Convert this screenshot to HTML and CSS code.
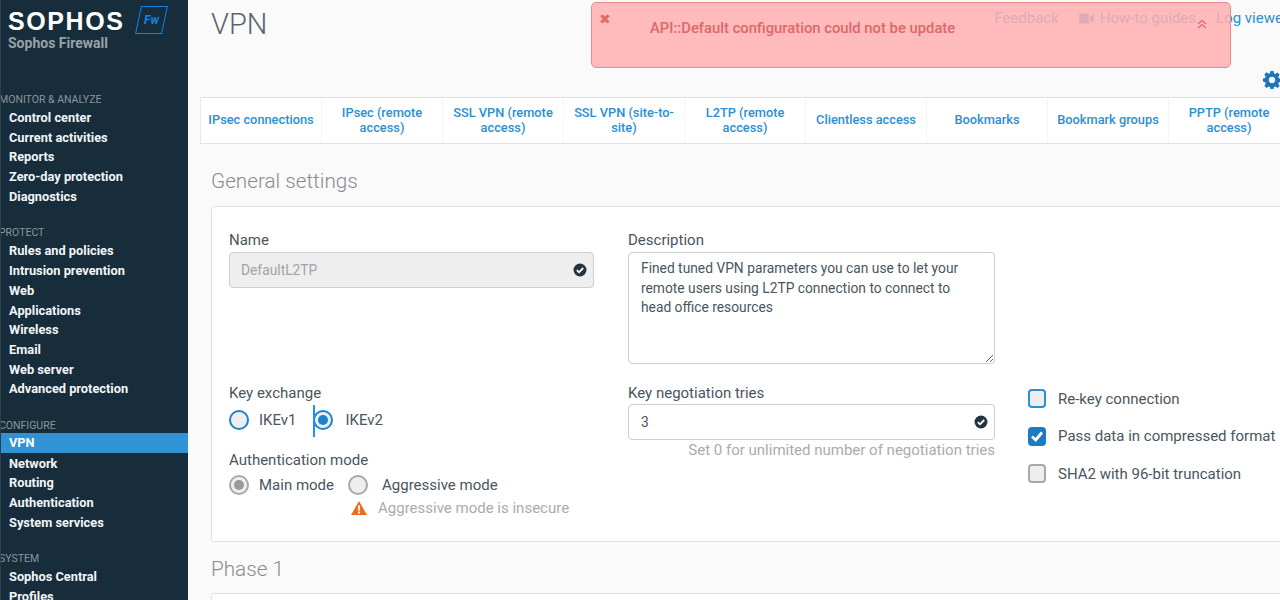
FILE: index.html
```html
<!DOCTYPE html>
<html lang="en">
<head>
<meta charset="utf-8">
<title>VPN - Sophos Firewall</title>
<link rel="stylesheet" href="styles.css">
</head>
<body>
<div class="app">
  <aside class="sidebar">
    <div class="brand">
      <div class="brand-top">
        <span class="logo">SOPHOS</span>
        <span class="fw"><span class="fw-text">Fw</span></span>
      </div>
      <div class="product">Sophos Firewall</div>
    </div>
    <nav class="nav">
      <div class="group">
        <div class="group-title">MONITOR &amp; ANALYZE</div>
        <a class="item">Control center</a>
        <a class="item">Current activities</a>
        <a class="item">Reports</a>
        <a class="item">Zero-day protection</a>
        <a class="item">Diagnostics</a>
      </div>
      <div class="group">
        <div class="group-title">PROTECT</div>
        <a class="item">Rules and policies</a>
        <a class="item">Intrusion prevention</a>
        <a class="item">Web</a>
        <a class="item">Applications</a>
        <a class="item">Wireless</a>
        <a class="item">Email</a>
        <a class="item">Web server</a>
        <a class="item">Advanced protection</a>
      </div>
      <div class="group">
        <div class="group-title">CONFIGURE</div>
        <a class="item active">VPN</a>
        <a class="item">Network</a>
        <a class="item">Routing</a>
        <a class="item">Authentication</a>
        <a class="item">System services</a>
      </div>
      <div class="group">
        <div class="group-title">SYSTEM</div>
        <a class="item">Sophos Central</a>
        <a class="item">Profiles</a>
      </div>
    </nav>
  </aside>

  <main class="main">
    <header class="topbar">
      <h1 class="title">VPN</h1>
      <div class="links">
        <a class="link feedback">Feedback</a>
        <a class="link guides">
          <svg class="video" viewBox="0 0 16 12" width="15" height="11"><rect x="0" y="0.5" width="10.5" height="11" rx="1.5"/><path d="M11.5 4.5 16 1v10l-4.500-3.500z"/></svg>
          How-to guides
        </a>
        <a class="link viewer">Log viewer</a>
      </div>
    </header>
    <div class="gear-row">
      <svg class="gear" viewBox="0 0 20 20" width="18" height="18"><path fill-rule="evenodd" d="M8.300 0h3.400l.5 2.700c.6.2 1.100.4 1.600.7l2.300-1.600 2.400 2.400-1.600 2.300c.3.500.5 1 .7 1.600l2.700.5v3.400l-2.700.5c-.2.600-.4 1.100-.7 1.600l1.600 2.300-2.400 2.400-2.300-1.600c-.5.3-1 .5-1.600.7l-.5 2.700H8.300l-.5-2.700c-.6-.2-1.100-.4-1.600-.7l-2.300 1.600-2.400-2.400 1.600-2.300c-.3-.5-.5-1-.7-1.600L-.300 11.700V8.300l2.700-.5c.2-.6.4-1.100.7-1.600L1.500 3.900l2.400-2.400 2.300 1.600c.5-.3 1-.5 1.600-.7zM10 6.500a3.500 3.500 0 1 0 0 7 3.500 3.500 0 0 0 0-7z"/></svg>
    </div>
    <div class="tabs">
      <a class="tab">IPsec connections</a>
      <a class="tab">IPsec (remote access)</a>
      <a class="tab">SSL VPN (remote access)</a>
      <a class="tab">SSL VPN (site-to-site)</a>
      <a class="tab">L2TP (remote access)</a>
      <a class="tab">Clientless access</a>
      <a class="tab">Bookmarks</a>
      <a class="tab">Bookmark groups</a>
      <a class="tab">PPTP (remote access)</a>
    </div>

    <section class="section">
      <h2 class="section-title">General settings</h2>
      <div class="card form">
        <div class="field">
          <label class="label">Name</label>
          <div class="control disabled">
            <span class="value">DefaultL2TP</span>
            <svg class="ok" viewBox="0 0 14 14" width="14" height="14"><circle cx="7" cy="7" r="6.500"/><path class="tick" d="M3.800 7.200 6 9.300 10.200 5"/></svg>
          </div>
        </div>
        <div class="field">
          <label class="label">Description</label>
          <textarea class="textarea" readonly>Fined tuned VPN parameters you can use to let your remote users using L2TP connection to connect to head office resources</textarea>
        </div>
        <div class="spacer"></div>

        <div class="left-stack">
          <div class="label">Key exchange</div>
          <div class="radio-row">
            <span class="radio blue"></span><span class="opt opt-ike1">IKEv1</span>
            <span class="caret-wrap"><span class="caret"></span><span class="radio blue on"></span></span><span class="opt">IKEv2</span>
          </div>
          <div class="label auth">Authentication mode</div>
          <div class="radio-row">
            <span class="radio grey on"></span><span class="opt opt-main">Main mode</span>
            <span class="radio grey"></span><span class="opt opt-agg">Aggressive mode</span>
          </div>
          <div class="warn">
            <svg class="warn-icon" viewBox="0 0 16 14" width="16" height="14"><path d="M8 0 16 14H0z"/><rect class="mark" x="7" y="4.500" width="2" height="5"/><rect class="mark" x="7" y="10.500" width="2" height="2"/></svg>
            <span>Aggressive mode is insecure</span>
          </div>
        </div>
        <div class="field">
          <label class="label">Key negotiation tries</label>
          <div class="control">
            <span class="value dark">3</span>
            <svg class="ok" viewBox="0 0 14 14" width="14" height="14"><circle cx="7" cy="7" r="6.500"/><path class="tick" d="M3.800 7.200 6 9.300 10.200 5"/></svg>
          </div>
          <div class="hint">Set 0 for unlimited number of negotiation tries</div>
        </div>
        <div class="checks">
          <div class="check-row"><span class="check blue"></span><span class="opt">Re-key connection</span></div>
          <div class="check-row"><span class="check checked"><svg viewBox="0 0 18 18" width="18" height="18"><path d="M4 9.500 7.700 13 14 5.500"/></svg></span><span class="opt">Pass data in compressed format</span></div>
          <div class="check-row"><span class="check grey"></span><span class="opt">SHA2 with 96-bit truncation</span></div>
        </div>
      </div>
    </section>

    <section class="section phase">
      <h2 class="section-title">Phase 1</h2>
      <div class="card empty"></div>
    </section>
  </main>

  <div class="alert">
    <span class="alert-x">&#10006;</span>
    <span class="alert-text">API::Default configuration could not be update</span>
    <svg class="alert-up" viewBox="0 0 10 10" width="10" height="10"><path d="M1 5 5 1.500 9 5M1 9 5 5.500 9 9"/></svg>
  </div>
</div>
</body>
</html>
```
FILE: styles.css
```css
* { box-sizing: border-box; }
html, body { margin: 0; height: 100%; overflow: hidden; }
body { font-family: Roboto, "Noto Sans", sans-serif; background: #fafafa; color: #4a5560; }

.app { display: flex; height: 600px; width: 1280px; overflow: hidden; position: relative; }

.sidebar { width: 188px; flex: none; background: #172d3b; border-left: 1px solid #2b404d; overflow: hidden; }
.brand { padding: 8px 0 0 7px; height: 93px; }
.brand-top { display: flex; align-items: flex-start; }
.logo { font-family: "Liberation Sans", Arial, sans-serif; font-weight: 700; font-size: 25px; line-height: 26px; color: #fff; letter-spacing: 1.600px; }
.fw { width: 27px; height: 28px; margin: -2px 0 0 13px; border: 1.500px solid #0f84e0; transform: skewX(-12deg); display: flex; align-items: center; justify-content: center; }
.fw-text { font-size: 12px; font-weight: 700; font-style: italic; color: #0f84e0; transform: skewX(12deg); }
.product { font-size: 14px; font-weight: 700; color: #98a2a9; margin-top: 1px; line-height: 16px; }

.nav { display: flex; flex-direction: column; }
.group { margin-bottom: 20px; }
.group-title { font-size: 10.500px; line-height: 13px; color: #8b969d; margin-left: -2px; white-space: nowrap; margin-bottom: 2px; }
.item { display: block; height: 19.700px; line-height: 19.700px; padding-left: 8px; font-size: 12.800px; font-weight: 700; color: #f2f5f7; white-space: nowrap; }
.item.active { background: #2f93d6; color: #fff; margin: -1px 0 1px; }

.main { flex: 1; min-width: 0; overflow: hidden; }
.topbar { display: flex; justify-content: space-between; height: 70px; padding-left: 23px; }
.title { margin: 7px 0 0; font-size: 29px; line-height: 34px; font-weight: 300; color: #5a6570; }
.links { display: flex; white-space: nowrap; font-size: 15px; line-height: 18px; padding-top: 9px; margin-right: -8px; }
.link { color: #2f8fd0; display: flex; align-items: center; height: 18px; }
.feedback { margin-right: 20px; }
.guides { margin-right: 20px; gap: 6px; }
.video { fill: #2f8fd0; }
.gear-row { display: flex; justify-content: flex-end; height: 27px; margin-right: -1px; padding-top: 1px; }
.gear { fill: #1b75bc; }

.tabs { display: grid; grid-template-columns: repeat(9, 121px); height: 47px; margin-left: 12px; margin-right: -9px; background: #fff; border: 1px solid #e2e2e2; border-width: 1px 0; }
.tab { display: flex; align-items: center; justify-content: center; text-align: center; padding: 0 6px 2px; font-size: 12.800px; line-height: 15px; font-weight: 500; color: #2a8fd3; border-left: 1px solid #f4f4f4; }
.tab:first-child { border-left: 1px solid #e8e8e8; }

.section { padding-left: 23px; }
.section-title { margin: 0; font-size: 20.700px; line-height: 26px; font-weight: 300; color: #868c92; }
.section:not(.phase) .section-title { padding-top: 24px; height: 62px; }
.card { background: #fff; border: 1px solid #e2e2e2; border-radius: 3px; margin-right: -10px; }
.form { height: 336px; padding: 24px 0 0 17px; display: grid; grid-template-columns: 365px 367px 1fr; column-gap: 34px; grid-template-rows: 153px 1fr; }
.form > .field:nth-child(-n+2) > .label { margin-bottom: 1px; }

.phase { padding-top: 14px; }
.empty { height: 40px; margin-top: 11px; }

.label { font-size: 15px; line-height: 18px; color: #4a5560; display: block; }
.field { display: flex; flex-direction: column; }
.control { height: 36px; margin-top: 2px; border: 1px solid #cfcfcf; border-radius: 4px; background: #fff; display: flex; align-items: center; justify-content: space-between; padding: 0 6px 0 12px; }
.control.disabled { background: #eeeeee; padding-left: 11px; }
.value { font-size: 13.800px; color: #a0a4a8; }
.value.dark { color: #4a5560; }
.ok circle { fill: #26343f; }
.ok .tick { fill: none; stroke: #fff; stroke-width: 1.800; }
.textarea { width: 367px; height: 112px; margin-top: 2px; border: 1px solid #cfcfcf; border-radius: 4px; padding: 6px 24px 6px 12px; font: 13.800px/19.500px Roboto, "Noto Sans", sans-serif; color: #4a5560; outline: none; resize: both; background: #fff; }
.hint { margin-top: 1px; text-align: right; font-size: 15px; line-height: 18px; color: #a8acb0; }

.radio-row { display: flex; align-items: center; height: 26px; margin-top: 5px; }
.radio { width: 20px; height: 20px; border-radius: 50%; border: 2px solid #1b83c9; background: #eeeeee; display: inline-block; position: relative; flex: none; }
.radio.grey { border-color: #a8a8a8; }
.radio.on::after { content: ""; position: absolute; inset: 3px; border-radius: 50%; background: #1b83c9; }
.radio.grey.on::after { background: #9a9a9a; }
.opt { font-size: 15px; line-height: 18px; color: #4a5560; white-space: nowrap; }
.opt-ike1 { margin: 0 16px 0 10px; }
.caret-wrap { display: flex; align-items: center; position: relative; margin-right: 13px; }
.caret { position: absolute; left: 0; top: -5px; width: 2px; height: 32px; background: #1e90ff; z-index: 1; }
.opt-main { margin: 0 14px 0 10px; }
.opt-agg { margin-left: 14px; }
.auth { margin-top: 18px; }
.radio-row + .auth + .radio-row { margin-top: 3px; }
.warn { display: flex; align-items: center; gap: 11px; margin: 1px 0 0 122px; font-size: 15px; line-height: 18px; color: #a8acb0; white-space: nowrap; }
.warn-icon { fill: #f26a1b; flex: none; }
.warn-icon .mark { fill: #fff; }

.checks { display: flex; flex-direction: column; margin: -4px 0 0 -1px; }
.check-row { display: flex; align-items: center; height: 37.500px; gap: 12px; }
.check { width: 18px; height: 19px; border: 2px solid #a8a8a8; border-radius: 4px; background: #eeeeee; display: block; flex: none; }
.check.blue { border-color: #2a8fd6; }
.check.checked { background: #1b7cc0; border: 0; }
.check svg { display: block; fill: none; stroke: #fff; stroke-width: 2.800; }

.alert { position: absolute; left: 591px; top: 2px; width: 640px; height: 66px; background: rgba(255, 175, 175, 0.85); border: 1px solid #f08a8a; border-radius: 5px; }
.alert-x { position: absolute; left: 7px; top: 9px; font-size: 14px; line-height: 14px; color: #e06a6a; }
.alert-text { position: absolute; left: 58px; top: 15px; font-size: 14.800px; line-height: 20px; color: #e0666a; font-weight: 500; }
.alert-up { position: absolute; left: 605px; top: 16px; fill: none; stroke: #e0666a; stroke-width: 1.200; }
```
